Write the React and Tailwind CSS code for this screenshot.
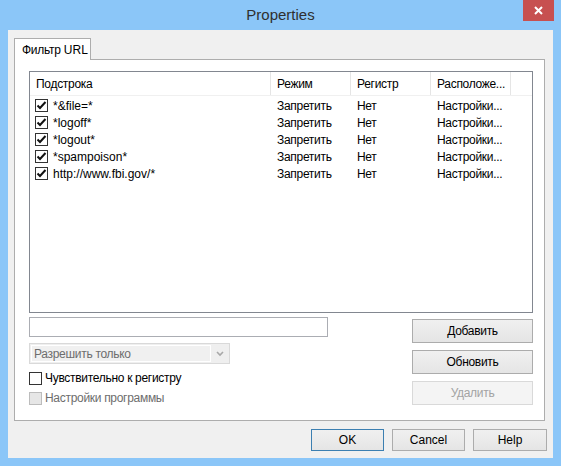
import React from "react";

const font = { fontFamily: '"Liberation Sans", "DejaVu Sans", sans-serif' };

function Check({ checked, disabled }) {
  return (
    <div
      className={
        "w-[13px] h-[13px] border flex items-center justify-center shrink-0 " +
        (disabled ? "border-[#bcbcbc] bg-[#e6e6e6]" : "border-[#333333] bg-white")
      }
    >
      {checked && (
        <svg width="11" height="11" viewBox="0 0 11 11">
          <path d="M1.5 5.5 L4 8 L9.5 2" fill="none" stroke="#111" strokeWidth="2" />
        </svg>
      )}
    </div>
  );
}

function Btn({ children, className = "", disabled, def }) {
  return (
    <div
      className={
        "flex items-center justify-center border text-[12px] " +
        (disabled
          ? "border-[#d9d9d9] bg-[#f4f4f4] text-[#a3a3a3] "
          : def
          ? "border-[#3c7fb1] bg-gradient-to-b from-[#f0f0f0] to-[#e5e5e5] text-black "
          : "border-[#acacac] bg-gradient-to-b from-[#f0f0f0] to-[#e5e5e5] text-black ") +
        className
      }
    >
      {children}
    </div>
  );
}

export default function App() {
  const rows = ["*&file=*", "*logoff*", "*logout*", "*spampoison*", "http://www.fbi.gov/*"];
  return (
    <div className="w-[561px] h-[466px] bg-[#8bc6f8] flex flex-col" style={font}>
      <div className="h-[30px] shrink-0 relative flex items-center justify-center">
        <span className="text-[15px] text-[#2f2f2f] mt-[1px]">Properties</span>
        <div className="absolute top-0 right-[7px] w-[31px] h-[21px] bg-[#c75050] flex items-center justify-center">
          <svg width="9" height="9" viewBox="0 0 9 9">
            <path d="M1 1 L8 8 M8 1 L1 8" stroke="#fff" strokeWidth="2" />
          </svg>
        </div>
      </div>
      <div className="mx-[8px] mb-[8px] flex-1 bg-[#f0f0f0] flex flex-col pl-[6px] pr-[8px] pt-[8px] pb-[7px]">
        <div className="relative z-10 -mb-[1px] w-[77px] h-[22px] border border-b-0 border-[#adadad] bg-white text-[12px] text-black pl-[7px] flex items-center">
          <span className="tracking-[-0.3px]">Фильтр</span>&nbsp;URL
        </div>
        <div className="h-[362px] border border-[#adadad] bg-white flex flex-col pl-[14px] pr-[11px] pt-[11px]">
          <div className="h-[242px] border border-[#828790] bg-white flex flex-col text-[12px] text-black">
            <div className="h-[24px] flex border-b border-[#f0f0f0] tracking-[-0.3px]">
              <div className="w-[241px] border-r border-[#e5e5e5] pl-[6px] flex items-center">Подстрока</div>
              <div className="w-[80px] border-r border-[#e5e5e5] pl-[6px] flex items-center">Режим</div>
              <div className="w-[80px] border-r border-[#e5e5e5] pl-[6px] flex items-center">Регистр</div>
              <div className="w-[80px] border-r border-[#e5e5e5] pl-[6px] flex items-center">Расположе...</div>
            </div>
            <div className="pt-[1px] flex flex-col">
              {rows.map((r) => (
                <div key={r} className="h-[17px] flex items-center">
                  <div className="w-[241px] pl-[5px] flex items-center gap-[5px]">
                    <Check checked />
                    <span>{r}</span>
                  </div>
                  <div className="w-[80px] pl-[6px] tracking-[-0.3px]">Запретить</div>
                  <div className="w-[80px] pl-[6px] tracking-[-0.3px]">Нет</div>
                  <div className="w-[80px] pl-[6px] tracking-[-0.3px]">Настройки...</div>
                </div>
              ))}
            </div>
          </div>
          <div className="flex justify-between">
            <div className="w-[299px] flex flex-col">
              <div className="mt-[4px] h-[20px] border border-[#abadb3] bg-white" />
              <div className="mt-[6px] h-[21px] w-[201px] border border-[#d9d9d9] bg-[#efefef] flex p-[1px]">
                <div className="flex-1 border border-white bg-[#f0f0f0] text-[12px] text-[#6d6d6d] pl-[2px] flex items-center tracking-[-0.3px]">
                  Разрешить только
                </div>
                <div className="w-[17px] flex items-center justify-center">
                  <svg width="8" height="6" viewBox="0 0 8 6">
                    <path d="M1 1 L4 4 L7 1" fill="none" stroke="#a8a8a8" strokeWidth="1.6" />
                  </svg>
                </div>
              </div>
              <div className="mt-[7px] flex items-center gap-[3px] text-[12px] text-black h-[14px] tracking-[-0.3px]">
                <Check />
                <span>Чувствительно к регистру</span>
              </div>
              <div className="mt-[6px] flex items-center gap-[3px] text-[12px] text-[#6d6d6d] h-[14px] tracking-[-0.3px]">
                <Check disabled />
                <span>Настройки программы</span>
              </div>
            </div>
            <div className="w-[121px] flex flex-col tracking-[-0.3px]">
              <Btn className="mt-[6px] h-[24px]">Добавить</Btn>
              <Btn className="mt-[7px] h-[24px]">Обновить</Btn>
              <Btn className="mt-[7px] h-[24px]" disabled>Удалить</Btn>
            </div>
          </div>
        </div>
        <div className="mt-[8px] flex justify-end gap-[8px]">
          <Btn def className="w-[73px] h-[22px]">OK</Btn>
          <Btn className="w-[73px] h-[22px]">Cancel</Btn>
          <Btn className="w-[74px] h-[22px] -mr-[2px]">Help</Btn>
        </div>
      </div>
    </div>
  );
}
